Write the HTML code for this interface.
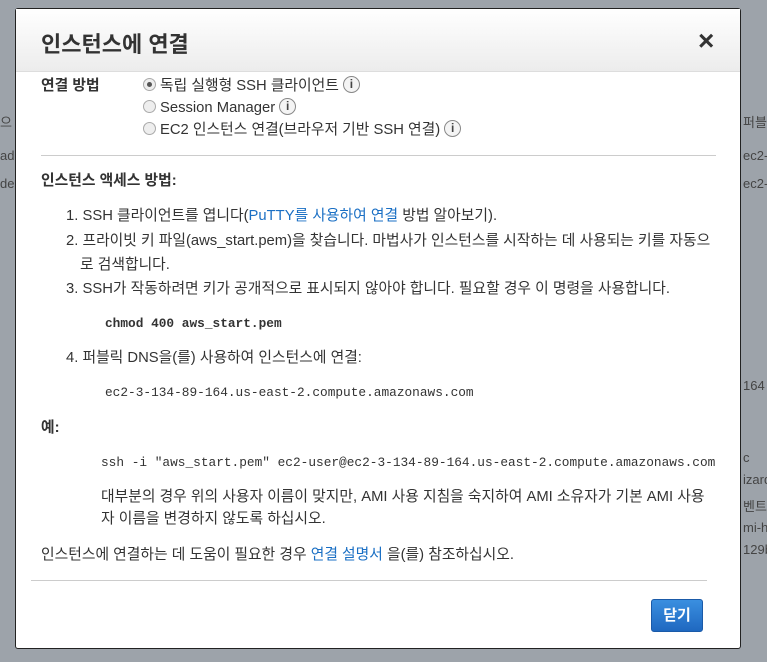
<!DOCTYPE html>
<html><head><meta charset="utf-8"><style>
body{margin:0;width:767px;height:662px;background:#9da3aa;font-family:"Liberation Sans","Noto Sans CJK KR",sans-serif;color:#333;position:relative;overflow:hidden;font-size:14.8px}
.bg{position:absolute;color:#444;font-size:13px;white-space:nowrap}
.m{position:absolute;left:15px;top:8px;width:726px;height:641px;background:#fff;border:1px solid #222;border-radius:3px;box-sizing:border-box}
.hd{height:62px;background:linear-gradient(#fff,#ececec);border-bottom:1px solid #ddd;position:relative}
.hd h1{margin:0;position:absolute;left:25px;top:18px;font-size:22px;font-weight:bold;color:#333}
.x{position:absolute;left:682px;top:16px;font-size:28px;color:#333;font-weight:bold}
.a{position:absolute;white-space:nowrap;line-height:20px}
.r{display:inline-block;width:11px;height:11px;border:1px solid #aaa;border-radius:50%;background:#eee;vertical-align:middle;margin-right:4px;position:relative;margin-top:-3px}
.r.on:after{content:"";position:absolute;left:3px;top:3px;width:5px;height:5px;border-radius:50%;background:#555}
.i{display:inline-block;width:15px;height:15px;border:1px solid #888;border-radius:50%;font-size:12px;line-height:15px;text-align:center;color:#444;background:#f4f4f4;vertical-align:middle;margin-left:4px;font-weight:bold;margin-top:-3px}
.mono{font-family:"Liberation Mono",monospace;font-size:12.8px}
a{color:#1a6fc4;text-decoration:none}
.hr{position:absolute;height:1px;background:#ccc}
.btn{position:absolute;left:635px;top:590px;width:50px;height:31px;background:linear-gradient(#3a8fe0,#1f68c0);border:1px solid #1a5aa8;border-radius:3px;color:#fff;font-weight:bold;font-size:15px;line-height:31px;text-align:center}
</style></head><body>
<div class="bg" style="left:0;top:112px">으</div>
<div class="bg" style="left:0;top:148px">ad</div>
<div class="bg" style="left:0;top:176px">de</div>
<div class="bg" style="left:743px;top:112px">퍼블</div>
<div class="bg" style="left:743px;top:148px">ec2-</div>
<div class="bg" style="left:743px;top:176px">ec2-</div>
<div class="bg" style="left:743px;top:378px">164</div>
<div class="bg" style="left:743px;top:450px">c</div>
<div class="bg" style="left:743px;top:472px">izard</div>
<div class="bg" style="left:743px;top:496px">벤트</div>
<div class="bg" style="left:743px;top:520px">mi-hv</div>
<div class="bg" style="left:743px;top:542px">129b</div>
<div class="m">
<div class="hd"><h1>인스턴스에 연결</h1><div class="x">×</div></div>
<div class="a" style="left:25px;top:67px;font-weight:bold">연결 방법</div>
<div class="a" style="left:127px;top:67px"><span class="r on"></span>독립 실행형 SSH 클라이언트<span class="i">i</span></div>
<div class="a" style="left:127px;top:89px"><span class="r"></span>Session Manager<span class="i">i</span></div>
<div class="a" style="left:127px;top:111px"><span class="r"></span>EC2 인스턴스 연결(브라우저 기반 SSH 연결)<span class="i">i</span></div>
<div class="hr" style="left:25px;top:146px;width:675px"></div>
<div class="a" style="left:25px;top:162px;font-weight:bold">인스턴스 액세스 방법:</div>
<div class="a" style="left:50px;top:197px">1. SSH 클라이언트를 엽니다(<a>PuTTY를 사용하여 연결</a> 방법 알아보기).</div>
<div class="a" style="left:50px;top:222px">2. 프라이빗 키 파일(aws_start.pem)을 찾습니다. 마법사가 인스턴스를 시작하는 데 사용되는 키를 자동으</div>
<div class="a" style="left:64px;top:246px">로 검색합니다.</div>
<div class="a" style="left:50px;top:270px">3. SSH가 작동하려면 키가 공개적으로 표시되지 않아야 합니다. 필요할 경우 이 명령을 사용합니다.</div>
<div class="a mono" style="left:89px;top:305px;font-weight:bold">chmod 400 aws_start.pem</div>
<div class="a" style="left:50px;top:339px">4. 퍼블릭 DNS을(를) 사용하여 인스턴스에 연결:</div>
<div class="a mono" style="left:89px;top:374px">ec2-3-134-89-164.us-east-2.compute.amazonaws.com</div>
<div class="a" style="left:25px;top:409px;font-weight:bold">예:</div>
<div class="a mono" style="left:85px;top:444px;font-size:12.8px">ssh -i "aws_start.pem" ec2-user@ec2-3-134-89-164.us-east-2.compute.amazonaws.com</div>
<div class="a" style="left:85px;top:478px">대부분의 경우 위의 사용자 이름이 맞지만, AMI 사용 지침을 숙지하여 AMI 소유자가 기본 AMI 사용</div>
<div class="a" style="left:85px;top:500px">자 이름을 변경하지 않도록 하십시오.</div>
<div class="a" style="left:25px;top:536px">인스턴스에 연결하는 데 도움이 필요한 경우 <a>연결 설명서</a> 을(를) 참조하십시오.</div>
<div class="hr" style="left:15px;top:571px;width:676px"></div>
<div class="btn">닫기</div>
</div>
</body></html>
